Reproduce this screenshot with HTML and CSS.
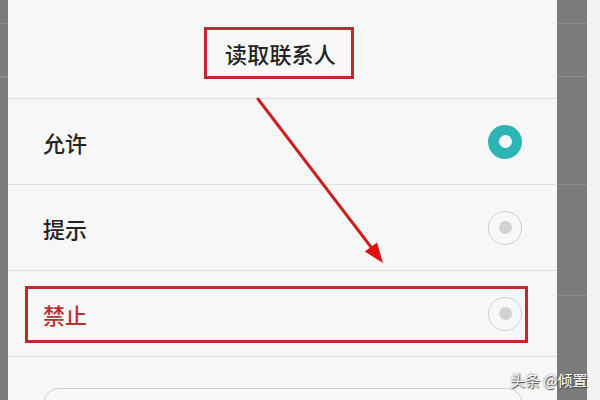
FILE: index.html
```html
<!DOCTYPE html>
<html lang="zh">
<head>
<meta charset="utf-8">
<link rel="stylesheet" href="styles.css">
</head>
<body>
<div class="screen">
  <div class="strip strip-left">
    <div class="bg-row r1"></div><div class="bg-row r2"></div><div class="bg-row r3"></div>
  </div>
  <div class="dialog">
    <div class="title-bar">
      <div class="title-box">读取联系人</div>
    </div>
    <div class="option">
      <span class="label">允许</span>
      <span class="radio radio-on"></span>
    </div>
    <div class="option">
      <span class="label">提示</span>
      <span class="radio radio-off"></span>
    </div>
    <div class="option option-deny">
      <span class="label label-red">禁止</span>
      <span class="radio radio-off"></span>
      <span class="highlight"></span>
    </div>
    <div class="footer">
      <div class="btn"></div>
    </div>
  </div>
  <div class="strip strip-right">
    <div class="bg-row r1"></div><div class="bg-row r2"></div><div class="bg-row r3"></div><div class="bg-row r4"></div>
  </div>
  <div class="strip strip-edge"></div>

  <svg class="arrow" width="600" height="400" viewBox="0 0 600 400">
    <line x1="258" y1="99" x2="371" y2="247" stroke="#c82222" stroke-width="3" stroke-linecap="round"/>
    <polygon points="383,263 364.8,251.6 377,242.4" fill="#e01010"/>
  </svg>
  <div class="watermark">头条 @倾置</div>
</div>
</body>
</html>
```
FILE: styles.css
```css
* { box-sizing: border-box; }
html, body { margin: 0; padding: 0; }
body {
  width: 600px;
  height: 400px;
  overflow: hidden;
  font-family: "Noto Sans CJK SC", "Noto Sans", sans-serif;
}
.screen {
  position: relative;
  display: flex;
  width: 600px;
  height: 400px;
  background: #7b7b7b;
  overflow: hidden;
}
.strip {
  display: flex;
  flex-direction: column;
  background: #7b7b7b;
  flex: none;
}
.strip-left { width: 8px; }
.strip-right { width: 30px; }
.strip-edge { width: 13px; background: #f2f2f2; }
.bg-row { border-bottom: 1px solid #8c8c8c; flex: none; }
.strip-left .r1 { height: 24px; }
.strip-left .r2 { height: 53px; }
.strip-right .r1 { height: 24px; }
.strip-right .r2 { height: 53px; }
.strip-right .r3 { height: 108px; }
.strip-right .r4 { height: 111px; }

.dialog {
  flex: none;
  width: 549px;
  height: 400px;
  background: #f7f7f7;
  display: flex;
  flex-direction: column;
  overflow: hidden;
}
.title-bar {
  flex: none;
  height: 99px;
  border-bottom: 1px solid #dedede;
  display: flex;
  justify-content: center;
  align-items: flex-start;
  padding-top: 27px;
  padding-right: 8px;
}
.title-box {
  width: 150px;
  height: 52px;
  border: 3px solid #bf2a2e;
  display: flex;
  align-items: center;
  justify-content: center;
  padding-left: 4px;
  font-size: 22px;
  font-weight: 500;
  color: #222;
  letter-spacing: 0.2px;
}
.option {
  flex: none;
  position: relative;
  height: 86px;
  border-bottom: 1px solid #e0e0e0;
  display: flex;
  align-items: center;
  justify-content: space-between;
  padding: 0 35px 0 35px;
}
.option-deny { height: 86px; }
.label {
  font-size: 22px;
  font-weight: 500;
  color: #222;
}
.label-red { color: #b83232; }
.radio {
  width: 34px;
  height: 34px;
  border-radius: 50%;
  display: flex;
  align-items: center;
  justify-content: center;
}
.radio::after {
  content: "";
  width: 13px;
  height: 13px;
  border-radius: 50%;
}
.radio-on { background: #2db5b5; }
.radio-on::after { background: #fafafa; }
.radio-off { border: 1px solid #cfcfcf; background: #f8f8f8; }
.radio-off::after { background: #d2d2d2; }
.highlight {
  position: absolute;
  left: 17px;
  top: 15px;
  width: 503px;
  height: 57px;
  border: 3px solid #bf2a2e;
}
.footer {
  flex: none;
  padding: 31px 34px 0 35px;
}
.btn {
  height: 40px;
  border: 1px solid #cfcfcf;
  border-radius: 16px;
  background: #f8f8f8;
}
.arrow {
  position: absolute;
  left: 0;
  top: 0;
}
.watermark {
  position: absolute;
  left: 510px;
  top: 369px;
  font-size: 15px;
  color: #fff;
  text-shadow: 0 0 2px #555, 1px 1px 1px #444;
  white-space: nowrap;
}
```
